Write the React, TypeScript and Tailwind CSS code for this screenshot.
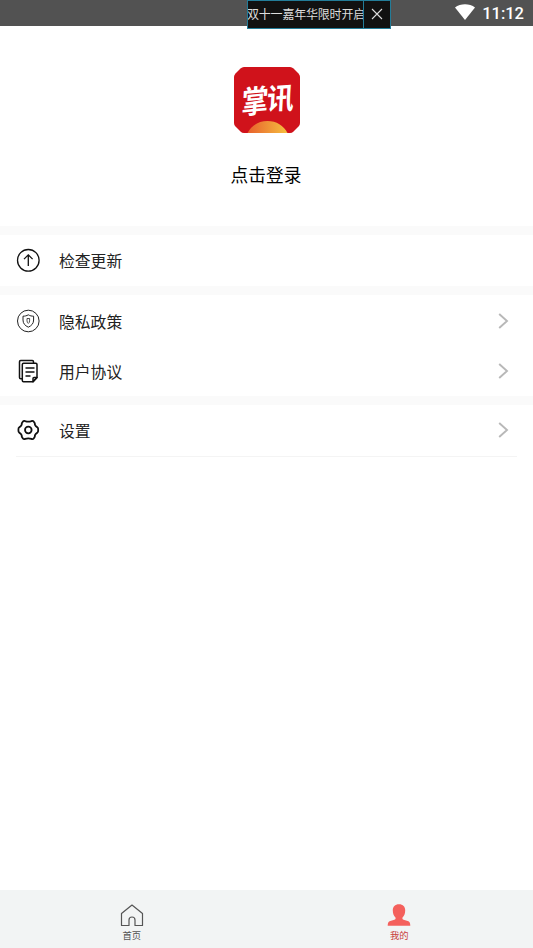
import type { ReactNode } from "react";

type RowProps = {
  icon: ReactNode;
  label: string;
  arrow?: boolean;
};

const UpdateIcon = () => (
  <svg viewBox="0 0 24 24" className="h-6 w-6" fill="none" stroke="#111" strokeWidth="1.3">
    <circle cx="12.3" cy="12.3" r="10.8" />
    <path d="M12.3 18V7.300M8 11.100l4.300-4.200 4.300 4.200" />
  </svg>
);

const PrivacyIcon = () => (
  <svg viewBox="0 0 24 24" className="h-6 w-6" fill="none" stroke="#222" strokeWidth="1">
    <circle cx="12.3" cy="12" r="10.8" />
    <path d="M12.3 5.800c-1.700 1-3.400 1.400-5.300 1.400v3.800c0 3.500 2 5.600 5.300 7.200 3.300-1.600 5.300-3.700 5.300-7.200V7.200c-1.900 0-3.600-.4-5.300-1.400z" />
    <path d="M11 9.500h2.600v2.300c0 1.300-.5 2-1.300 2.600-.8-.6-1.300-1.300-1.300-2.600z" strokeWidth=".8" />
  </svg>
);

const AgreementIcon = () => (
  <svg viewBox="0 0 24 24" className="h-6 w-6" fill="none" stroke="#111" strokeWidth="1.5" strokeLinejoin="round">
    <path d="M6 19.8H4.7c-.8 0-1.2-.4-1.2-1.2V2.7c0-.8.4-1.2 1.2-1.2h11.6c.8 0 1.2.4 1.2 1.2v1.5" />
    <path d="M7.5 4.2h12.3c.8 0 1.2.4 1.2 1.2v13.1L17 22.8H7.5c-.8 0-1.2-.4-1.2-1.2V5.4c0-.8.4-1.2 1.2-1.2z" />
    <path d="M21 18.5h-3c-.7 0-1 .3-1 1v3.3zM9.5 9h9M9.5 13h9M9.5 17h5" />
  </svg>
);

const SettingsIcon = () => (
  <svg viewBox="0 0 24 24" className="h-6 w-6" fill="none" stroke="#111" strokeWidth="1.8" strokeLinejoin="round">
    <path d="M9.2 3.1Q12.3 4.3 15.4 3.1Q16.8 2.3 17.9 3.8Q19.2 5.2 18.9 6.6Q19.6 8.3 21.1 9.1Q22.4 9.9 22.2 12Q22.4 14.1 21.1 14.9Q19.6 15.7 18.9 17.4Q19.2 18.8 17.9 20.2Q16.8 21.7 15.4 20.9Q12.3 19.7 9.2 20.9Q7.8 21.7 6.7 20.2Q5.4 18.8 5.7 17.4Q5 15.7 3.5 14.9Q2.2 14.1 2.4 12Q2.2 9.9 3.5 9.1Q5 8.3 5.7 6.6Q5.4 5.2 6.7 3.8Q7.8 2.3 9.2 3.1Z" />
    <circle cx="12.3" cy="12" r="3.3" />
  </svg>
);

const Logo = () => (
  <svg viewBox="0 0 66 66" className="h-[66px] w-[66px]">
    <defs>
      <linearGradient id="sun" x1="0" x2="1">
        <stop offset="0" stopColor="#e8602c" />
        <stop offset="1" stopColor="#f5c040" />
      </linearGradient>
    </defs>
    <path d="M10 0h46q2 0 3.5 1.5l5 5Q66 8 66 10v46q0 2-1.5 3.5l-5 5Q58 66 56 66H10q-2 0-3.5-1.5l-5-5Q0 58 0 56V10q0-2 1.5-3.5l5-5Q8 0 10 0z" fill="#d0121b" />
    <path d="M13.5 66c4-7.500 11-12 20-12s16 4.500 20 12z" fill="url(#sun)" />
    <g fill="#fff" fontFamily="'Noto Sans CJK SC', sans-serif" fontWeight="700" fontSize="28">
      <text transform="matrix(.96 -.09 -.06 1.12 7 47)">掌</text>
      <text transform="matrix(.96 -.06 -.06 1.06 32.5 43)">讯</text>
    </g>
  </svg>
);

const Row = ({ icon, label, arrow }: RowProps) => (
  <div className="flex h-[50px] items-center pl-4 pr-6">
    {icon}
    <span className="ml-[19px] mt-0.5 flex-1 text-[15.8px] leading-6 text-[#222]">{label}</span>
    {arrow && (
      <svg viewBox="0 0 11 16" className="h-4 w-[11px]" fill="none" stroke="#b8b8b8" strokeWidth="1.9">
        <path d="M1.2 1l7.8 7-7.8 7" />
      </svg>
    )}
  </div>
);

const StatusBar = () => (
  <div className="relative flex h-[26px] items-center justify-end bg-[#525252] pr-[9px] text-white">
    <svg viewBox="0 0 20 16" className="mb-0.5 mr-[7px] h-4 w-5">
      <path d="M0 3.5C5.5-.8 14.5-.8 20 3.5L10 16z" fill="#fff" />
    </svg>
    <span className="mt-0.5 font-[Roboto] text-[16.5px] font-medium leading-none">11:12</span>
    <div className="absolute left-[247px] top-0 flex h-[29px] w-[144px] border border-[#237c98] bg-[#111]">
      <div className="w-[116px] overflow-hidden whitespace-nowrap border-r border-[#237c98] text-[12px] leading-[26px] tracking-[-0.2px] text-[#ddd]">
        <span className="-ml-px">双十一嘉年华限时开启</span>
      </div>
      <svg viewBox="0 0 26 27" className="h-[27px] w-[26px]" stroke="#ddd" strokeWidth="1.1">
        <path d="M8 8l10 10M18 8L8 18" />
      </svg>
    </div>
  </div>
);

const App = () => {
  return (
    <div className="flex h-[948px] w-[533px] flex-col overflow-hidden bg-white font-['Noto_Sans_CJK_SC',sans-serif]">
      <StatusBar />
      <div className="flex h-[200px] flex-col items-center pt-[41px]">
        <Logo />
        <div className="mr-px mt-[27px] text-[17.7px] leading-7 text-black">点击登录</div>
      </div>
      <div className="h-[9px] bg-[#fafafa]" />
      <Row icon={<UpdateIcon />} label="检查更新" />
      <div className="mb-px mt-px h-[9px] bg-[#fafafa]" />
      <Row icon={<PrivacyIcon />} label="隐私政策" arrow />
      <Row icon={<AgreementIcon />} label="用户协议" arrow />
      <div className="h-[9px] bg-[#fafafa]" />
      <Row icon={<SettingsIcon />} label="设置" arrow />
      <div className="mx-4 mt-px h-px bg-[#f4f4f4]" />
      <div className="flex-1" />
      <nav className="flex h-[58px] bg-[#f2f4f4]">
        <div className="flex w-[264px] flex-col items-center pt-[14px] text-[#555]">
          <svg viewBox="0 0 24 23" className="h-[23px] w-6" fill="none" stroke="#555" strokeWidth="1.2">
            <path d="M1.5 9.5L12 1l10.5 8.5V21.500H15V16c0-2-1-3-3-3s-3 1-3 3v5.500H1.500z" strokeLinejoin="round" />
          </svg>
          <span className="text-[9.3px] leading-4">首页</span>
        </div>
        <div className="flex w-[270px] flex-col items-center pt-[14px] text-[#c8403c]">
          <svg viewBox="0 0 24 23" className="ml-0.5 h-[23px] w-6" fill="#f4605c">
            <path d="M12 .3c4 0 6.2 2.5 6.2 6.2 0 3.3-1.1 5.5-2.8 7.2v.6c0 .8.4 1.2 1.2 1.4l4.1 1.2c1.900.6 2.600 1.900 2.600 4.900H.7c0-3 .7-4.300 2.600-4.900l4.100-1.200c.8-.2 1.200-.6 1.200-1.400v-.6c-1.700-1.700-2.800-3.900-2.800-7.200C5.800 2.800 8 .3 12 .3z" />
          </svg>
          <span className="ml-0.5 text-[9.3px] leading-4">我的</span>
        </div>
      </nav>
    </div>
  );
};

export default App;
